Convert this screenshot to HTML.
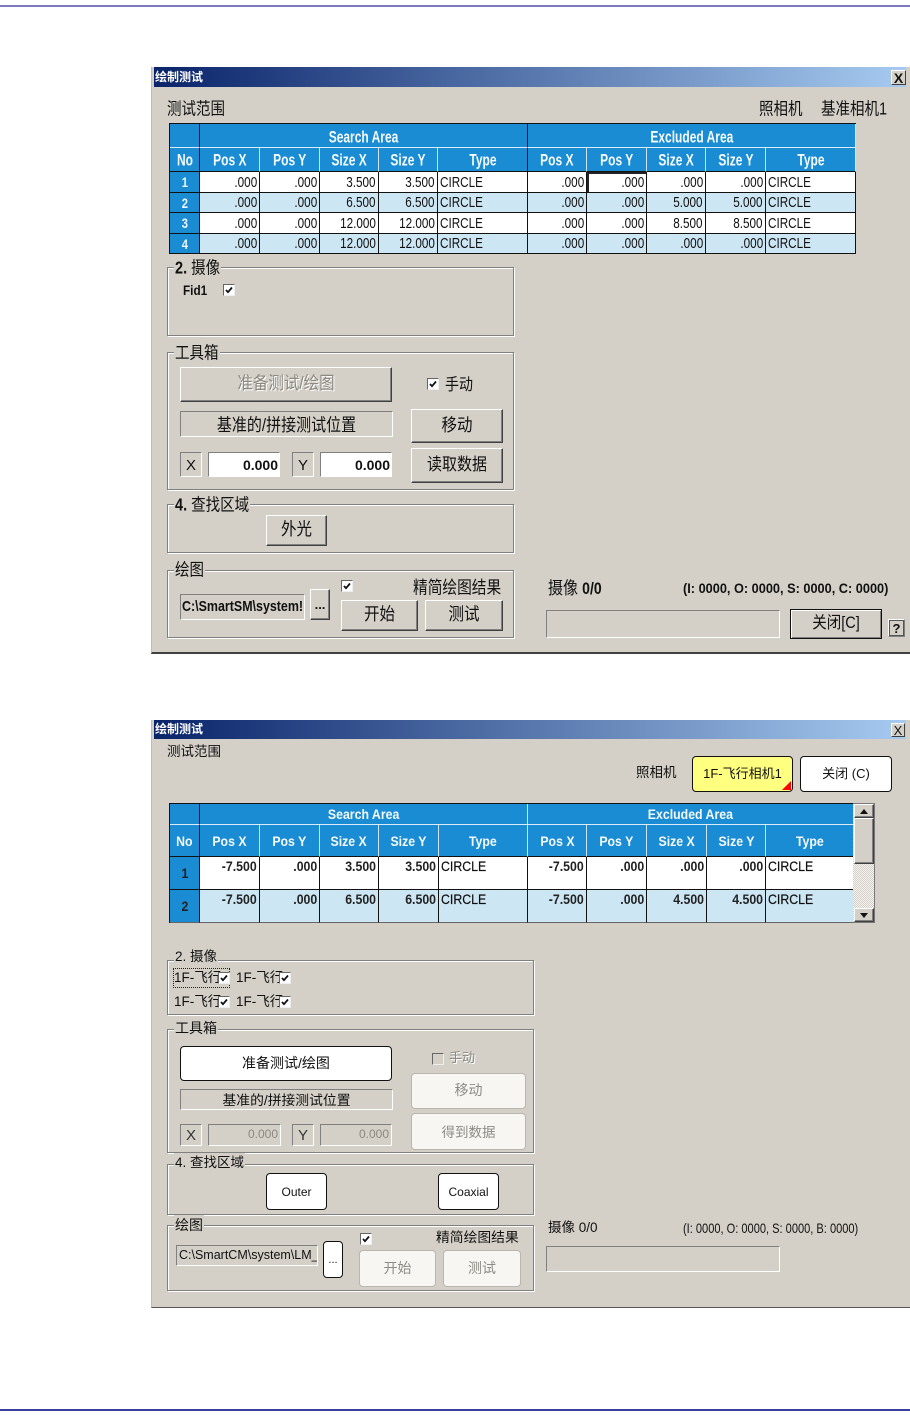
<!DOCTYPE html>
<html lang="zh"><head><meta charset="utf-8"><title>绘制测试</title>
<style>
html,body{margin:0;padding:0;background:#fff}
body{position:relative;width:910px;height:1421px;overflow:hidden;font-family:"Liberation Sans","Noto Sans CJK SC",sans-serif;color:#111}
*{box-sizing:border-box}
.a{position:absolute}
.dlg{position:absolute;background:#d4d0c8;border-left:1px solid #bbb}
.title{position:absolute;height:20px;background:linear-gradient(90deg,#0a246a,#a6caf0);color:#fff;font-weight:700;font-size:12px;line-height:20px;padding-left:1px}
.t{position:absolute;white-space:nowrap;height:20px;line-height:20px;font-size:15px}
.ty{transform:scaleY(1.18);transform-origin:0 50%}
.g{position:absolute;border:1px solid #808080;box-shadow:1px 1px 0 #fff,inset 1px 1px 0 #fff}
.lb{position:absolute;background:#d4d0c8;white-space:nowrap;height:20px;line-height:20px;font-size:15px;padding:0 1px}
.b{position:absolute;display:flex;align-items:center;justify-content:center;background:#d4d0c8;border:1px solid;border-color:#fff #404040 #404040 #fff;box-shadow:inset -1px -1px 0 #808080;font-size:16px;white-space:nowrap}
.b span{display:inline-block;transform:scaleY(1.15);position:relative;top:-2.5px}
.w{position:absolute;display:flex;align-items:center;justify-content:center;background:#fff;border:1px solid #111;border-radius:4px;font-size:13px;white-space:nowrap}
.w span,.off span{position:relative;top:-1px}
.off{position:absolute;display:flex;align-items:center;justify-content:center;background:#f7f6f3;border:1px solid #b9b6ae;border-radius:4px;font-size:14px;color:#8d8b85;white-space:nowrap}
.s{position:absolute;border:1px solid;border-color:#808080 #fff #fff #808080;display:flex;align-items:center;white-space:nowrap}
.dis{color:#8a8880;text-shadow:1px 1px 0 #fff}
.cb{position:absolute;width:12px;height:12px;background:#fff;border:1px solid;border-color:#666 #eee #eee #666}
.cb svg{position:absolute;left:0;top:0;width:10px;height:10px}
table{position:absolute;border-collapse:separate;border-spacing:0;table-layout:fixed;border-top:1px solid #111;border-left:1px solid #111}
td,th{padding:0;overflow:hidden;white-space:nowrap;border-right:1px solid #111;border-bottom:1px solid #111;font-weight:400;box-sizing:border-box}
th{background:#1a8cd3;color:#f4f9fc;font-weight:700;text-align:center;border-right-color:#cfe4f2;border-bottom-color:#dcecf6;font-size:15px;padding-top:2px}
tr:first-child th{padding-top:4px}
th.n,td.n{border-right-color:#111}
th.k{border-bottom-color:#111}
td.n{background:#1a8cd3;color:#eef6fb;font-weight:700;text-align:center;font-size:14px}
td{font-size:15px;text-align:right;background:#fff;padding-right:2px}
td.c{text-align:left;padding:0 0 0 2px}
tr.z td:not(.n){background:#cde6f4}
th i{display:inline-block;font-style:normal;transform:scale(.8,1.08)}
td i{display:inline-block;font-style:normal;transform:scaleX(.78);transform-origin:100% 50%}
td.c i{transform-origin:0 50%}
td.n{padding-right:0}
td.n i{transform:scaleX(.8);transform-origin:50% 50%}
.d2 td{vertical-align:top;font-size:14px;line-height:18px;padding-top:0;font-weight:700;color:#222}
.d2 td.n{vertical-align:middle;padding-top:0}
.d2 td i{transform:scaleX(.88)}
.d2 td.c i{font-weight:400;color:#111;-webkit-text-stroke:.2px #111}
.d2 th{font-size:14px;padding-top:0}
.d2 tr:first-child th{padding-top:0}
.d2 th i{transform:scaleX(.88)}
.d2 tr:last-child td{border-bottom-color:#666}
.x{position:absolute;display:flex;align-items:center;justify-content:center;background:#d4d0c8;border:1px solid;border-color:#fff #404040 #404040 #fff;font-size:14px;font-weight:700}
</style></head><body>

<div class="a" style="left:0;top:5px;width:910px;height:2px;background:#7b7bbd"></div>
<div class="a" style="left:0;top:1409px;width:910px;height:2px;background:#3a3f9f"></div>

<!-- Dialog 1 -->
<div class="dlg" style="left:151px;top:67px;width:759px;height:587px;border-bottom:2px solid #404040"></div>
<div class="title" style="left:154px;top:67px;width:752px">绘制测试</div>
<div class="x" style="left:891px;top:70px;width:15px;height:15px">X</div>

<div class="t ty" style="left:167px;top:98px;font-size:14.5px;margin-top:2px">测试范围</div>
<div class="t ty" style="left:759px;top:100px;font-size:14.5px">照相机</div>
<div class="t ty" style="left:821px;top:100px;font-size:14.5px">基准相机1</div>

<table style="left:169px;top:123px;width:687px">
<colgroup><col style="width:30px"><col style="width:60px"><col style="width:60px"><col style="width:59px"><col style="width:59px"><col style="width:90px"><col style="width:59px"><col style="width:60px"><col style="width:59px"><col style="width:60px"><col style="width:90px"></colgroup>
<tr style="height:24px"><th class="n" style="height:24px"></th><th colspan="5" style="border-right-color:#111"><i>Search Area</i></th><th colspan="5"><i>Excluded Area</i></th></tr>
<tr style="height:24px"><th class="n k" style="height:24px"><i>No</i></th><th class="k"><i>Pos X</i></th><th class="k"><i>Pos Y</i></th><th class="k"><i>Size X</i></th><th class="k"><i>Size Y</i></th><th class="k" style="border-right-color:#111"><i>Type</i></th><th class="k"><i>Pos X</i></th><th class="k"><i>Pos Y</i></th><th class="k"><i>Size X</i></th><th class="k"><i>Size Y</i></th><th class="k"><i>Type</i></th></tr>
<tr><td class="n" style="height:21px"><i>1</i></td><td><i>.000</i></td><td><i>.000</i></td><td><i>3.500</i></td><td><i>3.500</i></td><td class="c"><i>CIRCLE</i></td><td><i>.000</i></td><td style="box-shadow:inset 2px 2px 0 #222"><i>.000</i></td><td><i>.000</i></td><td><i>.000</i></td><td class="c"><i>CIRCLE</i></td></tr>
<tr class="z"><td class="n" style="height:20px"><i>2</i></td><td><i>.000</i></td><td><i>.000</i></td><td><i>6.500</i></td><td><i>6.500</i></td><td class="c"><i>CIRCLE</i></td><td><i>.000</i></td><td><i>.000</i></td><td><i>5.000</i></td><td><i>5.000</i></td><td class="c"><i>CIRCLE</i></td></tr>
<tr><td class="n" style="height:21px"><i>3</i></td><td><i>.000</i></td><td><i>.000</i></td><td><i>12.000</i></td><td><i>12.000</i></td><td class="c"><i>CIRCLE</i></td><td><i>.000</i></td><td><i>.000</i></td><td><i>8.500</i></td><td><i>8.500</i></td><td class="c"><i>CIRCLE</i></td></tr>
<tr class="z"><td class="n" style="height:20px"><i>4</i></td><td><i>.000</i></td><td><i>.000</i></td><td><i>12.000</i></td><td><i>12.000</i></td><td class="c"><i>CIRCLE</i></td><td><i>.000</i></td><td><i>.000</i></td><td><i>.000</i></td><td><i>.000</i></td><td class="c"><i>CIRCLE</i></td></tr>
</table>

<div class="g" style="left:167px;top:267px;width:347px;height:69px"></div>
<div class="lb ty" style="left:174px;top:259px;font-size:14.5px"><b>2.</b> 摄像</div>
<div class="t" style="left:183px;top:280px;font-size:14px;font-weight:700;transform:scaleX(.84);transform-origin:0 50%">Fid1</div>
<div class="cb" style="left:223px;top:284px"><svg viewBox="0 0 10 10"><path d="M2 5l2 2.2L8 2.5" fill="none" stroke="#111" stroke-width="1.8"/></svg></div>

<div class="g" style="left:167px;top:352px;width:347px;height:138px"></div>
<div class="lb ty" style="left:174px;top:344px;font-size:14.5px">工具箱</div>
<div class="b dis" style="left:180px;top:367px;width:212px;height:35px;font-size:15.5px"><span>准备测试/绘图</span></div>
<div class="cb" style="left:427px;top:378px"><svg viewBox="0 0 10 10"><path d="M2 5l2 2.2L8 2.5" fill="none" stroke="#111" stroke-width="1.8"/></svg></div>
<div class="t ty" style="left:445px;top:374px;font-size:14px">手动</div>
<div class="s" style="left:180px;top:411px;width:213px;height:26px;justify-content:center;font-size:15px"><span class="ty" style="display:inline-block">基准的/拼接测试位置</span></div>
<div class="b" style="left:411px;top:409px;width:92px;height:34px;font-size:15.5px"><span>移动</span></div>
<div class="s" style="left:180px;top:452px;width:22px;height:25px;justify-content:center;font-size:15px;padding-top:1px">X</div>
<div class="s" style="left:208px;top:452px;width:72px;height:25px;background:#fff;justify-content:flex-end;padding-right:1px;font-weight:700;font-size:14px"><span>0.000</span></div>
<div class="s" style="left:292px;top:452px;width:22px;height:25px;justify-content:center;font-size:15px;padding-top:1px">Y</div>
<div class="s" style="left:320px;top:452px;width:72px;height:25px;background:#fff;justify-content:flex-end;padding-right:1px;font-weight:700;font-size:14px"><span>0.000</span></div>
<div class="b" style="left:411px;top:448px;width:92px;height:35px;font-size:15px"><span>读取数据</span></div>

<div class="g" style="left:167px;top:504px;width:347px;height:49px"></div>
<div class="lb ty" style="left:174px;top:496px;font-size:14.5px"><b>4.</b> 查找区域</div>
<div class="b" style="left:266px;top:515px;width:61px;height:31px;font-size:15.5px"><span>外光</span></div>

<div class="g" style="left:167px;top:570px;width:347px;height:68px"></div>
<div class="lb ty" style="left:174px;top:561px;font-size:14.5px">绘图</div>
<div class="s" style="left:180px;top:594px;width:125px;height:26px;padding-left:1px;font-size:15px;font-weight:700;overflow:hidden"><span style="display:inline-block;transform:scaleX(.83);transform-origin:0 50%;position:relative;top:-1px">C:\SmartSM\system!</span></div>
<div class="b" style="left:310px;top:589px;width:20px;height:31px;font-size:13px;font-weight:700">...</div>
<div class="cb" style="left:341px;top:580px"><svg viewBox="0 0 10 10"><path d="M2 5l2 2.2L8 2.5" fill="none" stroke="#111" stroke-width="1.8"/></svg></div>
<div class="t ty" style="left:413px;top:579px;font-size:14.7px">精简绘图结果</div>
<div class="b" style="left:341px;top:600px;width:77px;height:31px;font-size:15.5px"><span>开始</span></div>
<div class="b" style="left:425px;top:600px;width:78px;height:31px;font-size:15.5px"><span>测试</span></div>

<div class="t ty" style="left:548px;top:578px;font-size:15px">摄像 <b style="font-size:14px">0/0</b></div>
<div class="t" style="left:683px;top:578px;font-size:14px;font-weight:700;transform:scaleX(.91);transform-origin:0 50%">(I: 0000, O: 0000, S: 0000, C: 0000)</div>
<div class="s" style="left:546px;top:610px;width:234px;height:28px"></div>
<div class="b" style="left:790px;top:609px;width:92px;height:30px;border:1px solid #111;box-shadow:inset 1px 1px 0 #fff,inset -1px -1px 0 #808080;font-size:14.5px"><span>关闭[C]</span></div>
<div class="s" style="left:888px;top:619px;width:17px;height:18px;justify-content:center;font-size:13px;font-weight:700;border-color:#fff #808080 #808080 #fff;box-shadow:inset 0 0 0 1px #555">?</div>

<!-- Dialog 2 -->
<div class="dlg" style="left:151px;top:720px;width:759px;height:588px;border-bottom:1px solid #555"></div>
<div class="title" style="left:154px;top:720px;width:752px;height:19px;line-height:19px">绘制测试</div>
<div class="x" style="left:891px;top:723px;width:14px;height:14px;font-weight:400;font-size:13px">X</div>

<div class="t" style="left:167px;top:742px;font-size:13.5px">测试范围</div>
<div class="t" style="left:636px;top:763px;font-size:13.5px">照相机</div>
<div class="w" style="left:692px;top:756px;width:101px;height:36px;background:#ffff80;font-size:13px"><span style="top:-2px">1F-飞行相机1</span><svg class="a" style="right:1px;bottom:1px" width="9" height="9" viewBox="0 0 9 9"><path d="M9 0V9H0Z" fill="#f00"/></svg></div>
<div class="w" style="left:800px;top:756px;width:92px;height:36px;font-size:13px"><span style="top:-2px">关闭 (C)</span></div>

<table class="d2" style="left:169px;top:803px;width:685px">
<colgroup><col style="width:30px"><col style="width:60px"><col style="width:60px"><col style="width:59px"><col style="width:60px"><col style="width:89px"><col style="width:59px"><col style="width:60px"><col style="width:60px"><col style="width:59px"><col style="width:88px"></colgroup>
<tr><th class="n" style="height:21px"></th><th colspan="5"><i>Search Area</i></th><th colspan="5"><i>Excluded Area</i></th></tr>
<tr><th class="n k" style="height:32px"><i>No</i></th><th class="k"><i>Pos X</i></th><th class="k"><i>Pos Y</i></th><th class="k"><i>Size X</i></th><th class="k"><i>Size Y</i></th><th class="k"><i>Type</i></th><th class="k"><i>Pos X</i></th><th class="k"><i>Pos Y</i></th><th class="k"><i>Size X</i></th><th class="k"><i>Size Y</i></th><th class="k"><i>Type</i></th></tr>
<tr><td class="n" style="height:33px"><i>1</i></td><td><i>-7.500</i></td><td><i>.000</i></td><td><i>3.500</i></td><td><i>3.500</i></td><td class="c"><i>CIRCLE</i></td><td><i>-7.500</i></td><td><i>.000</i></td><td><i>.000</i></td><td><i>.000</i></td><td class="c"><i>CIRCLE</i></td></tr>
<tr class="z"><td class="n" style="height:33px"><i>2</i></td><td><i>-7.500</i></td><td><i>.000</i></td><td><i>6.500</i></td><td><i>6.500</i></td><td class="c"><i>CIRCLE</i></td><td><i>-7.500</i></td><td><i>.000</i></td><td><i>4.500</i></td><td><i>4.500</i></td><td class="c"><i>CIRCLE</i></td></tr>
</table>
<!-- scrollbar -->
<div class="a" style="left:853px;top:803px;width:22px;height:120px;background:repeating-conic-gradient(#d4d0c8 0 25%,#f4f3f0 0 50%) 0 0/2px 2px;border:1px solid #777;border-left:0"></div>
<div class="b" style="left:854px;top:804px;width:20px;height:14px"><svg width="8" height="5" viewBox="0 0 8 5"><path d="M4 0L8 5H0Z" fill="#111"/></svg></div>
<div class="b" style="left:854px;top:818px;width:20px;height:46px"></div>
<div class="b" style="left:854px;top:908px;width:20px;height:14px"><svg width="8" height="5" viewBox="0 0 8 5"><path d="M0 0H8L4 5Z" fill="#111"/></svg></div>

<div class="g" style="left:167px;top:960px;width:367px;height:55px"></div>
<div class="lb" style="left:174px;top:947px;font-size:13.5px">2. 摄像</div>
<div class="a" style="left:173px;top:968px;width:57px;height:20px;border:1px dotted #222"></div>
<div class="t" style="left:174px;top:968px;font-size:13.5px">1F-飞行</div>
<div class="cb" style="left:218px;top:972px"><svg viewBox="0 0 10 10"><path d="M2 5l2 2.2L8 2.5" fill="none" stroke="#111" stroke-width="1.8"/></svg></div>
<div class="t" style="left:236px;top:968px;font-size:13.5px">1F-飞行</div>
<div class="cb" style="left:279px;top:972px"><svg viewBox="0 0 10 10"><path d="M2 5l2 2.2L8 2.5" fill="none" stroke="#111" stroke-width="1.8"/></svg></div>
<div class="t" style="left:174px;top:992px;font-size:13.5px">1F-飞行</div>
<div class="cb" style="left:218px;top:996px"><svg viewBox="0 0 10 10"><path d="M2 5l2 2.2L8 2.5" fill="none" stroke="#111" stroke-width="1.8"/></svg></div>
<div class="t" style="left:236px;top:992px;font-size:13.5px">1F-飞行</div>
<div class="cb" style="left:279px;top:996px"><svg viewBox="0 0 10 10"><path d="M2 5l2 2.2L8 2.5" fill="none" stroke="#111" stroke-width="1.8"/></svg></div>

<div class="g" style="left:167px;top:1029px;width:367px;height:124px"></div>
<div class="lb" style="left:174px;top:1018px;font-size:14px">工具箱</div>
<div class="w" style="left:180px;top:1046px;width:212px;height:35px;font-size:14px"><span>准备测试/绘图</span></div>
<div class="cb" style="left:432px;top:1053px;background:#d4d0c8"></div>
<div class="t dis" style="left:449px;top:1048px;font-size:13px">手动</div>
<div class="s" style="left:180px;top:1089px;width:213px;height:21px;justify-content:center;font-size:13.8px;padding-bottom:2px">基准的/拼接测试位置</div>
<div class="off" style="left:411px;top:1073px;width:115px;height:36px"><span>移动</span></div>
<div class="off" style="left:411px;top:1113px;width:115px;height:37px;font-size:13.5px"><span>得到数据</span></div>
<div class="s" style="left:180px;top:1124px;width:22px;height:22px;justify-content:center;font-size:15px;color:#333">X</div>
<div class="s" style="left:208px;top:1124px;width:73px;height:22px;justify-content:flex-end;padding-right:2px;font-size:12px;color:#8a8880;padding-bottom:2px">0.000</div>
<div class="s" style="left:292px;top:1124px;width:22px;height:22px;justify-content:center;font-size:15px;color:#333">Y</div>
<div class="s" style="left:320px;top:1124px;width:72px;height:22px;justify-content:flex-end;padding-right:2px;font-size:12px;color:#8a8880;padding-bottom:2px">0.000</div>

<div class="g" style="left:167px;top:1164px;width:367px;height:51px"></div>
<div class="lb" style="left:174px;top:1153px;font-size:13.5px">4. 查找区域</div>
<div class="w" style="left:266px;top:1173px;width:61px;height:37px;font-size:12px">Outer</div>
<div class="w" style="left:438px;top:1173px;width:61px;height:37px;font-size:12px">Coaxial</div>

<div class="g" style="left:167px;top:1225px;width:367px;height:66px"></div>
<div class="lb" style="left:174px;top:1215px;font-size:14px">绘图</div>
<div class="s" style="left:176px;top:1245px;width:142px;height:21px;padding-left:2px;font-size:12.5px;overflow:hidden;padding-bottom:2px">C:\SmartCM\system\LM_I</div>
<div class="w" style="left:323px;top:1241px;width:20px;height:37px;font-size:11px">...</div>
<div class="cb" style="left:360px;top:1233px"><svg viewBox="0 0 10 10"><path d="M2 5l2 2.2L8 2.5" fill="none" stroke="#111" stroke-width="1.8"/></svg></div>
<div class="t" style="left:436px;top:1228px;font-size:13.8px">精简绘图结果</div>
<div class="off" style="left:359px;top:1250px;width:77px;height:37px"><span>开始</span></div>
<div class="off" style="left:443px;top:1250px;width:78px;height:37px"><span>测试</span></div>

<div class="t" style="left:548px;top:1218px;font-size:13.5px">摄像 0/0</div>
<div class="t" style="left:683px;top:1218px;font-size:14px;transform:scaleX(.79);transform-origin:0 50%">(I: 0000, O: 0000, S: 0000, B: 0000)</div>
<div class="s" style="left:546px;top:1246px;width:234px;height:26px"></div>

</body></html>
